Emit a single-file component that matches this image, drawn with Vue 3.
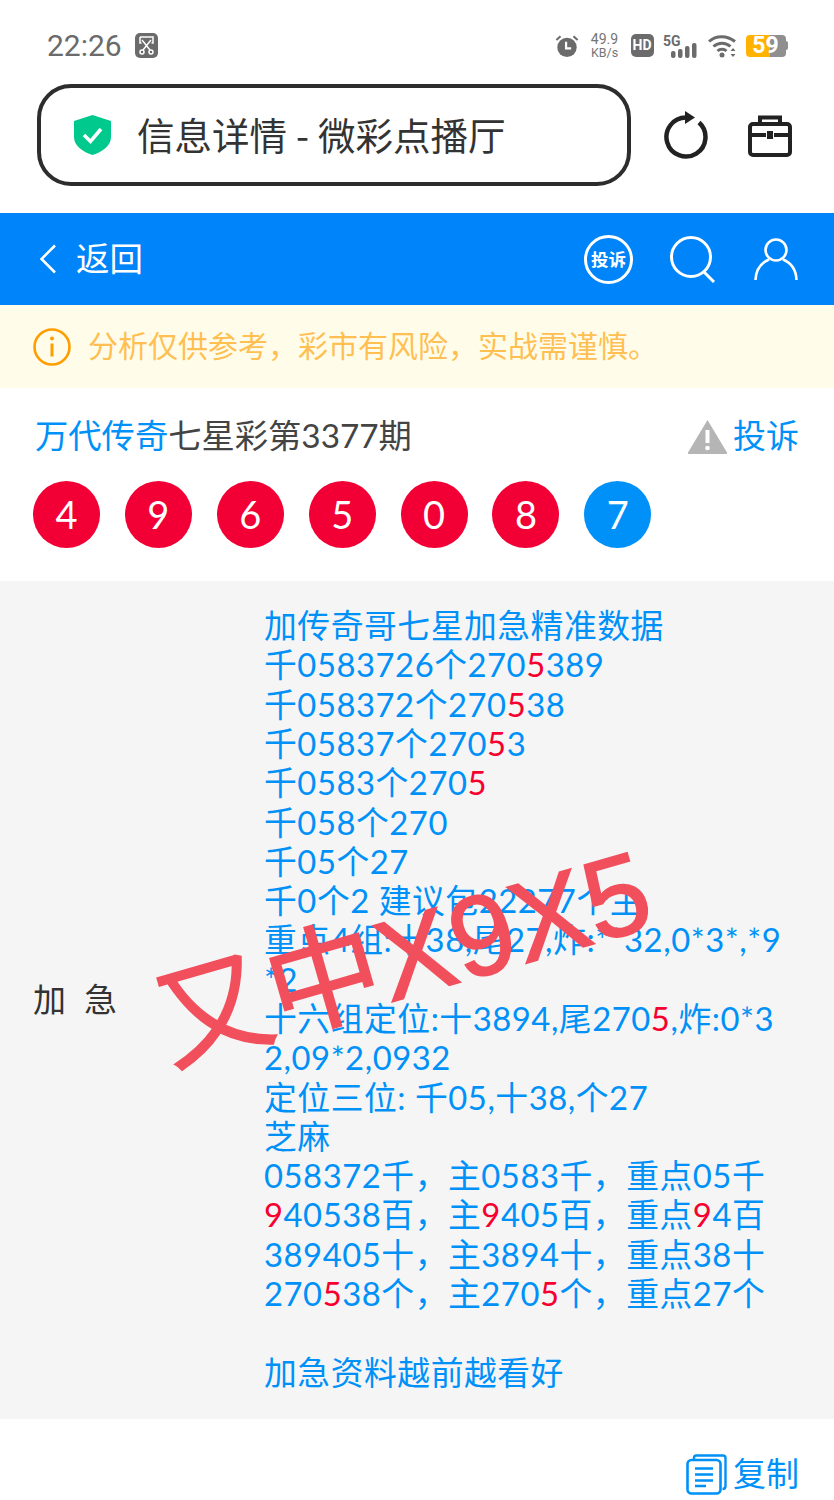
<script setup>
const balls = [
  { n: 4, c: 'red' }, { n: 9, c: 'red' }, { n: 6, c: 'red' }, { n: 5, c: 'red' },
  { n: 0, c: 'red' }, { n: 8, c: 'red' }, { n: 7, c: 'blue' }
]
const raw = [
  '加传奇哥七星加急精准数据',
  '千0583726个270[5]389',
  '千058372个270[5]38',
  '千05837个270[5]3',
  '千0583个270[5]',
  '千058个270',
  '千05个27',
  '千0个2 建议包22277个主',
  '重点4组:十38,尾27,炸:**32,0*3*,*9',
  '*2',
  '十六组定位:十3894,尾270[5],炸:0*3',
  '2,09*2,0932',
  '定位三位: 千05,十38,个27',
  '芝麻',
  '058372千，主0583千，重点05千',
  '[9]40538百，主[9]405百，重点[9]4百',
  '389405十，主3894十，重点38十',
  '270[5]38个，主270[5]个，重点27个',
  '\u00a0',
  '加急资料越前越看好'
]
const lines = raw.map(s =>
  s.split(/(\[\d\])/).filter(Boolean).map(p =>
    p[0] === '[' ? { t: p.slice(1, -1), red: true } : { t: p, red: false }
  )
)
</script>

<template>
  <div class="page">
    <div class="status">
      <div class="st-left">
        <span class="time">22:26</span>
        <svg class="shot" width="23" height="25" viewBox="0 0 23 25">
          <rect width="23" height="25" rx="5" fill="#6b6b6b" />
          <path d="M5 4h13v6h-1.500M5 4v6h1.500" fill="none" stroke="#fff" stroke-width="1.500" />
          <path d="M7 7l8 10M16 7l-8 10" stroke="#fff" stroke-width="1.500" />
          <circle cx="7" cy="19" r="2" fill="none" stroke="#fff" stroke-width="1.500" />
          <circle cx="16" cy="19" r="2" fill="none" stroke="#fff" stroke-width="1.500" />
        </svg>
      </div>
      <div class="st-right">
        <svg width="24" height="26" viewBox="0 0 26 26">
          <circle cx="13" cy="14.500" r="10.500" fill="#6b6b6b" />
          <path d="M1.500 6.500L6 2.500M24.500 6.500L20 2.500" stroke="#6b6b6b" stroke-width="2.200" />
          <path d="M12 8.500v7h5.500" fill="none" stroke="#fff" stroke-width="2.400" />
        </svg>
        <div class="speed"><span>49.9</span><span>KB/s</span></div>
        <div class="hd">HD</div>
        <svg width="36" height="25" viewBox="0 0 36 25">
          <text x="0" y="13" class="fiveg">5G</text>
          <rect x="8" y="18" width="4.500" height="7" rx="2" fill="#6b6b6b" />
          <rect x="15" y="16" width="4.500" height="9" rx="2" fill="#6b6b6b" />
          <rect x="22" y="13" width="4.500" height="12" rx="2" fill="#6b6b6b" />
          <rect x="29" y="10" width="4.500" height="15" rx="2" fill="#6b6b6b" />
        </svg>
        <svg width="29" height="24" viewBox="0 0 29 24">
          <path d="M1 7.500C8 1 19 1 27 7.500" fill="none" stroke="#6b6b6b" stroke-width="3" />
          <path d="M5.500 12.500C10.500 8 17.500 8 22.500 12.500" fill="none" stroke="#6b6b6b" stroke-width="3" />
          <path d="M9.500 17C12 14.500 16 14.500 18.500 17" fill="none" stroke="#6b6b6b" stroke-width="3" />
          <circle cx="14" cy="21" r="2.500" fill="#6b6b6b" />
          <path d="M25 14l-2.500 3h5zM25 23l-2.500-3h5z" fill="#6b6b6b" />
        </svg>
        <div class="batt">
          <div class="batt-body"><span>59</span></div>
          <i></i>
        </div>
      </div>
    </div>

    <div class="toolbar">
      <div class="addr">
        <svg class="shield" width="37" height="40" viewBox="0 0 37 40">
          <path d="M18.500 0L37 6v16c0 9-9 15-18.500 18C9 37 0 31 0 22V6z" fill="#00c98d" />
          <path d="M10 20l6.500 6.500L27 14" fill="none" stroke="#fff" stroke-width="3.500" />
        </svg>
        <span class="addr-text">信息详情<b>-</b>微彩点播厅</span>
      </div>
      <svg class="reload" width="44" height="48" viewBox="0 0 44 48">
        <path d="M22 6.500A19.500 19.500 0 1 0 35 11.500" fill="none" stroke="#222" stroke-width="4.500" />
        <path d="M21 0l10 6.500-10 6.500z" fill="#222" />
      </svg>
      <svg class="box" width="44" height="42" viewBox="0 0 44 42">
        <path d="M12 9V2.500h20V9" fill="none" stroke="#222" stroke-width="4" />
        <rect x="2" y="9" width="40" height="31" rx="3" fill="none" stroke="#222" stroke-width="4" />
        <path d="M2 20h16M26 20h16" stroke="#222" stroke-width="4" />
        <rect x="19" y="16" width="6" height="8" fill="#222" />
      </svg>
    </div>

    <div class="nav">
      <div class="nav-left">
        <svg width="18" height="30" viewBox="0 0 18 30">
          <path d="M16 1.500L2.500 15 16 28.500" fill="none" stroke="#fff" stroke-width="2.500" />
        </svg>
        <span>返回</span>
      </div>
      <div class="nav-right">
        <div class="ts">投诉</div>
        <svg width="46" height="47" viewBox="0 0 46 47">
          <circle cx="21" cy="21" r="19.500" fill="none" stroke="#fff" stroke-width="3" />
          <path d="M33 35l11 11" stroke="#fff" stroke-width="3" />
        </svg>
        <svg width="44" height="43" viewBox="0 0 44 43">
          <circle cx="22" cy="12" r="10.500" fill="none" stroke="#fff" stroke-width="2.600" />
          <path d="M1.500 42C2 30 9 24 15 21.500M42.500 42C42 30 35 24 29 21.500" fill="none" stroke="#fff" stroke-width="2.600" />
        </svg>
      </div>
    </div>

    <div class="notice">
      <svg width="38" height="38" viewBox="0 0 38 38">
        <circle cx="19" cy="19" r="17.500" fill="none" stroke="#ff9d00" stroke-width="2.600" />
        <circle cx="19" cy="10.500" r="2" fill="#ff9d00" />
        <path d="M19 15.500v13" stroke="#ff9d00" stroke-width="3" />
      </svg>
      <span>分析仅供参考，彩市有风险，实战需谨慎。</span>
    </div>

    <div class="result">
      <div class="result-head">
        <div class="title"><span class="link">万代传奇</span>七星彩第3377期</div>
        <div class="report">
          <svg width="41" height="35" viewBox="0 0 41 35">
            <path d="M20.500 1L40 33.500Q40.500 35 39 35H2Q.5 35 1 33.500z" fill="#b5b5b5" />
            <path d="M20.500 11v13" stroke="#fff" stroke-width="4" />
            <circle cx="20.500" cy="29" r="2.300" fill="#fff" />
          </svg>
          <span>投诉</span>
        </div>
      </div>
      <div class="balls">
        <div v-for="b in balls" :key="b.n" class="ball" :class="b.c">{{ b.n }}</div>
      </div>
    </div>

    <div class="detail">
      <div class="label"><span>加</span><span>急</span></div>
      <div class="content">
        <div v-for="(l, i) in lines" :key="i" class="line">
          <span v-for="(p, j) in l" :key="j" :class="{ hot: p.red }">{{ p.t }}</span>
        </div>
      </div>
      <div class="stamp">又中X9X5</div>
    </div>

    <div class="copy">
      <svg width="41" height="41" viewBox="0 0 41 41">
        <path d="M8 5V3.500Q8 1.500 10 1.500H37Q39.500 1.500 39.500 4V32Q39.500 35 36.500 35" fill="none" stroke="#0091f8" stroke-width="2.400" />
        <rect x="1.500" y="6" width="33" height="33.500" rx="4" fill="#fff" stroke="#0091f8" stroke-width="2.600" />
        <path d="M9 14.500H27M9 20.500H27M9 26.500H27M9 32H20" stroke="#0091f8" stroke-width="2.400" />
      </svg>
      <span>复制</span>
    </div>
  </div>
</template>

<style scoped>
.page {
  width: 834px;
  height: 1500px;
  overflow: hidden;
  background: #fff;
  font-family: "Lato", "Noto Sans CJK SC", sans-serif;
  color: #444;
}
.status {
  height: 84px;
  padding: 32px 46px 0 47px;
  box-sizing: border-box;
  display: flex;
  justify-content: space-between;
  align-items: flex-start;
}
.st-left { display: flex; align-items: center; gap: 13px; height: 27px; }
.time { font-size: 30px; line-height: 27px; color: #6b6b6b; font-family: "Roboto", sans-serif; }
.shot { display: block; }
.st-right { display: flex; align-items: center; gap: 9px; height: 27px; }
.speed {
  display: flex;
  flex-direction: column;
  align-items: center;
  font-family: "Roboto", sans-serif;
  color: #757575;
  font-size: 14px;
  line-height: 13px;
  width: 32px;
  margin-left: 1px;
}
.speed span:last-child { font-size: 12.500px; }
.hd {
  width: 23px;
  height: 23px;
  border-radius: 5px;
  background: #6b6b6b;
  color: #fff;
  font: 700 14px/23px "Roboto", sans-serif;
  text-align: center;
  margin-left: 1px;
}
.fiveg { font: 700 14px "Roboto", sans-serif; fill: #6b6b6b; }
.batt { display: flex; align-items: center; }
.batt-body {
  width: 40px;
  height: 22px;
  border-radius: 4px;
  background: linear-gradient(90deg, #ffb300 0 60%, #8f8f8f 60% 100%);
  color: #fff;
  font: 700 23px/22px "Roboto", sans-serif;
  text-align: center;
}
.batt i { width: 2.500px; height: 9px; background: #8f8f8f; border-radius: 0 2px 2px 0; }
.toolbar {
  height: 129px;
  display: flex;
  align-items: flex-start;
  padding-left: 37px;
}
.addr {
  width: 594px;
  height: 102px;
  box-sizing: border-box;
  border: 4.500px solid #2d2d2d;
  border-radius: 34px;
  display: flex;
  align-items: center;
  padding-left: 33px;
  flex: none;
}
.shield { flex: none; margin-top: 0; }
.addr-text {
  margin: 0 0 4px 26px;
  font-size: 37.500px;
  color: #333;
  font-family: "Noto Sans CJK SC", sans-serif;
  white-space: nowrap;
}
.addr-text b { font-weight: 400; margin: 0 9px; }
.reload { margin: 27px 0 0 33px; flex: none; }
.box { margin: 31px 0 0 40px; flex: none; }
.nav {
  height: 92px;
  background: #0084fa;
  color: #fff;
  display: flex;
  justify-content: space-between;
  align-items: center;
  padding: 0 36px 0 39px;
}
.nav-left { display: flex; align-items: center; gap: 19px; font-size: 33.500px; }
.nav-left span { margin-bottom: 6px; }
.nav-right { display: flex; align-items: center; gap: 38px; }
.ts {
  width: 49px;
  height: 49px;
  box-sizing: border-box;
  border: 3px solid #fff;
  border-radius: 50%;
  font-size: 17.500px;
  font-weight: 700;
  line-height: 43px;
  text-align: center;
  white-space: nowrap;
  margin-right: -1px;
}
.notice {
  height: 83px;
  background: #fffde9;
  display: flex;
  align-items: center;
  gap: 17px;
  padding-left: 33px;
  color: #ffbf52;
  font-size: 30px;
}
.notice span { margin-bottom: 6px; }
.result { height: 193px; padding: 28px 35px 0 33px; box-sizing: border-box; }
.result-head { display: flex; justify-content: space-between; align-items: center; height: 40px; }
.title { font-size: 33.300px; margin: 0 0 6px 2px; white-space: nowrap; color: #444; }
.link { color: #0091f8; }
.report { display: flex; align-items: center; gap: 5px; font-size: 33px; color: #0091f8; }
.report span { margin-bottom: 4px; }
.balls { display: flex; gap: 24.900px; margin-top: 25px; }
.ball {
  width: 67px;
  height: 67px;
  border-radius: 50%;
  color: #fff;
  font-size: 38px;
  line-height: 67px;
  text-align: center;
  flex: none;
}
.ball.red { background: #f20035; }
.ball.blue { background: #0091f8; }
.detail {
  position: relative;
  height: 838px;
  background: #f5f5f5;
  display: flex;
  align-items: center;
}
.label {
  width: 264px;
  padding-left: 33px;
  margin-bottom: 4px;
  box-sizing: border-box;
  display: flex;
  gap: 18px;
  font-size: 33px;
  color: #333;
  flex: none;
}
.content {
  color: #0091f8;
  font-size: 32.800px;
  letter-spacing: 0.530px;
  line-height: 39.300px;
  white-space: nowrap;
  margin-bottom: 2px;
}
.line { height: 39.300px; }
.hot { color: #f70030; }
.stamp {
  position: absolute;
  left: 150px;
  top: 302px;
  font-size: 114px;
  line-height: 150px;
  color: #f24f5d;
  -webkit-text-stroke: 1.500px #f24f5d;
  transform: rotate(-16deg);
  white-space: nowrap;
  font-family: "Liberation Sans", "Noto Sans CJK SC", sans-serif;
}
.copy {
  height: 81px;
  box-sizing: border-box;
  padding: 30px 35px 0 0;
  display: flex;
  justify-content: flex-end;
  align-items: center;
  gap: 6px;
  font-size: 33px;
  color: #0091f8;
}
.copy span { margin-bottom: 6px; }
</style>
